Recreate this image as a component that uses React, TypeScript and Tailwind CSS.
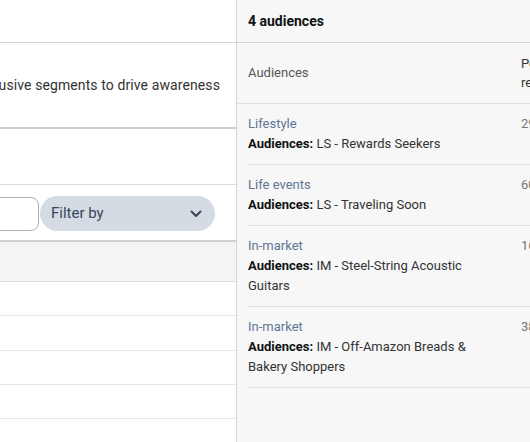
import React from "react";

const rows = [
  { cat: "Lifestyle", name: "LS - Rewards Seekers", num: "29" },
  { cat: "Life events", name: "LS - Traveling Soon", num: "60" },
  { cat: "In-market", name: "IM - Steel-String Acoustic Guitars", num: "16" },
  { cat: "In-market", name: "IM - Off-Amazon Breads & Bakery Shoppers", num: "38" },
];

export default function App() {
  return (
    <div
      className="flex w-[530px] h-[442px] overflow-hidden bg-white text-[14px] text-[#333]"
      style={{ fontFamily: 'Roboto, "Noto Sans", sans-serif' }}
    >
      {/* Left panel */}
      <div className="w-[236px] shrink-0 flex flex-col">
        <div className="h-[43px] border-b border-[#d5d5d5]" />
        <div className="h-[86px] flex items-center justify-end overflow-hidden pr-[16px] border-b-2 border-[#cfcfcf]">
          <span className="whitespace-nowrap text-[#333] tracking-[0.1px]">Reach exclusive segments to drive awareness</span>
        </div>
        <div className="h-[56px] border-b border-[#dcdcdc]" />
        <div className="h-[57px] pt-[2px] flex items-center justify-end pr-[21px] overflow-hidden border-b-2 border-[#d0d0d0]">
          <div className="w-[200px] h-[34px] shrink-0 bg-white border border-[#a9afb6] rounded-[8px]" />
          <div className="ml-[1px] w-[175px] h-[35px] shrink-0 rounded-full bg-[#d5dbe2] flex items-center justify-between pl-[11px] pr-[13px] text-[15px] text-[#37475a]">
            <span>Filter by</span>
            <svg width="12" height="8" viewBox="0 0 12 8" fill="none">
              <path d="M1.5 1.5 L6 6 L10.5 1.5" stroke="#37475a" strokeWidth="2" strokeLinecap="round" strokeLinejoin="round" />
            </svg>
          </div>
        </div>
        <div className="h-[40px] bg-[#f4f4f4] border-b border-[#dcdcdc]" />
        <div className="h-[34px] border-b border-[#e6e6e6]" />
        <div className="h-[35px] border-b border-[#e6e6e6]" />
        <div className="h-[34px] border-b border-[#e6e6e6]" />
        <div className="h-[34px] border-b border-[#e6e6e6]" />
        <div className="flex-1" />
      </div>

      {/* Right panel */}
      <div className="flex-1 min-w-0 bg-[#f7f7f7] border-l border-[#d5d5d5] flex flex-col overflow-hidden text-[13px]">
        <div className="h-[43px] shrink-0 flex items-center pl-[11px] border-b border-[#d5d5d5]">
          <span className="font-bold text-[14px] text-[#0f1111] whitespace-nowrap">4 audiences</span>
        </div>
        <div className="h-[61px] shrink-0 flex items-center border-b border-[#dedede]">
          <div className="w-[284px] shrink-0 pl-[11px] text-[#555]">Audiences</div>
          <div className="leading-[19px] text-[#333] whitespace-nowrap">
            <div>People</div>
            <div>reached</div>
          </div>
        </div>
        <div className="pl-[11px]">
          {rows.map((r, i) => (
            <div key={i} className="flex py-[10px] border-b border-[#dedede] leading-[20px]">
              <div className="w-[245px] shrink-0">
                <div className="text-[#5f7595]">{r.cat}</div>
                <div className="text-[#333]">
                  <span className="font-bold text-[#0f1111]">Audiences:</span> {r.name}
                </div>
              </div>
              <div className="ml-[28px] text-[#777] whitespace-nowrap">{r.num}</div>
            </div>
          ))}
        </div>
      </div>
    </div>
  );
}
